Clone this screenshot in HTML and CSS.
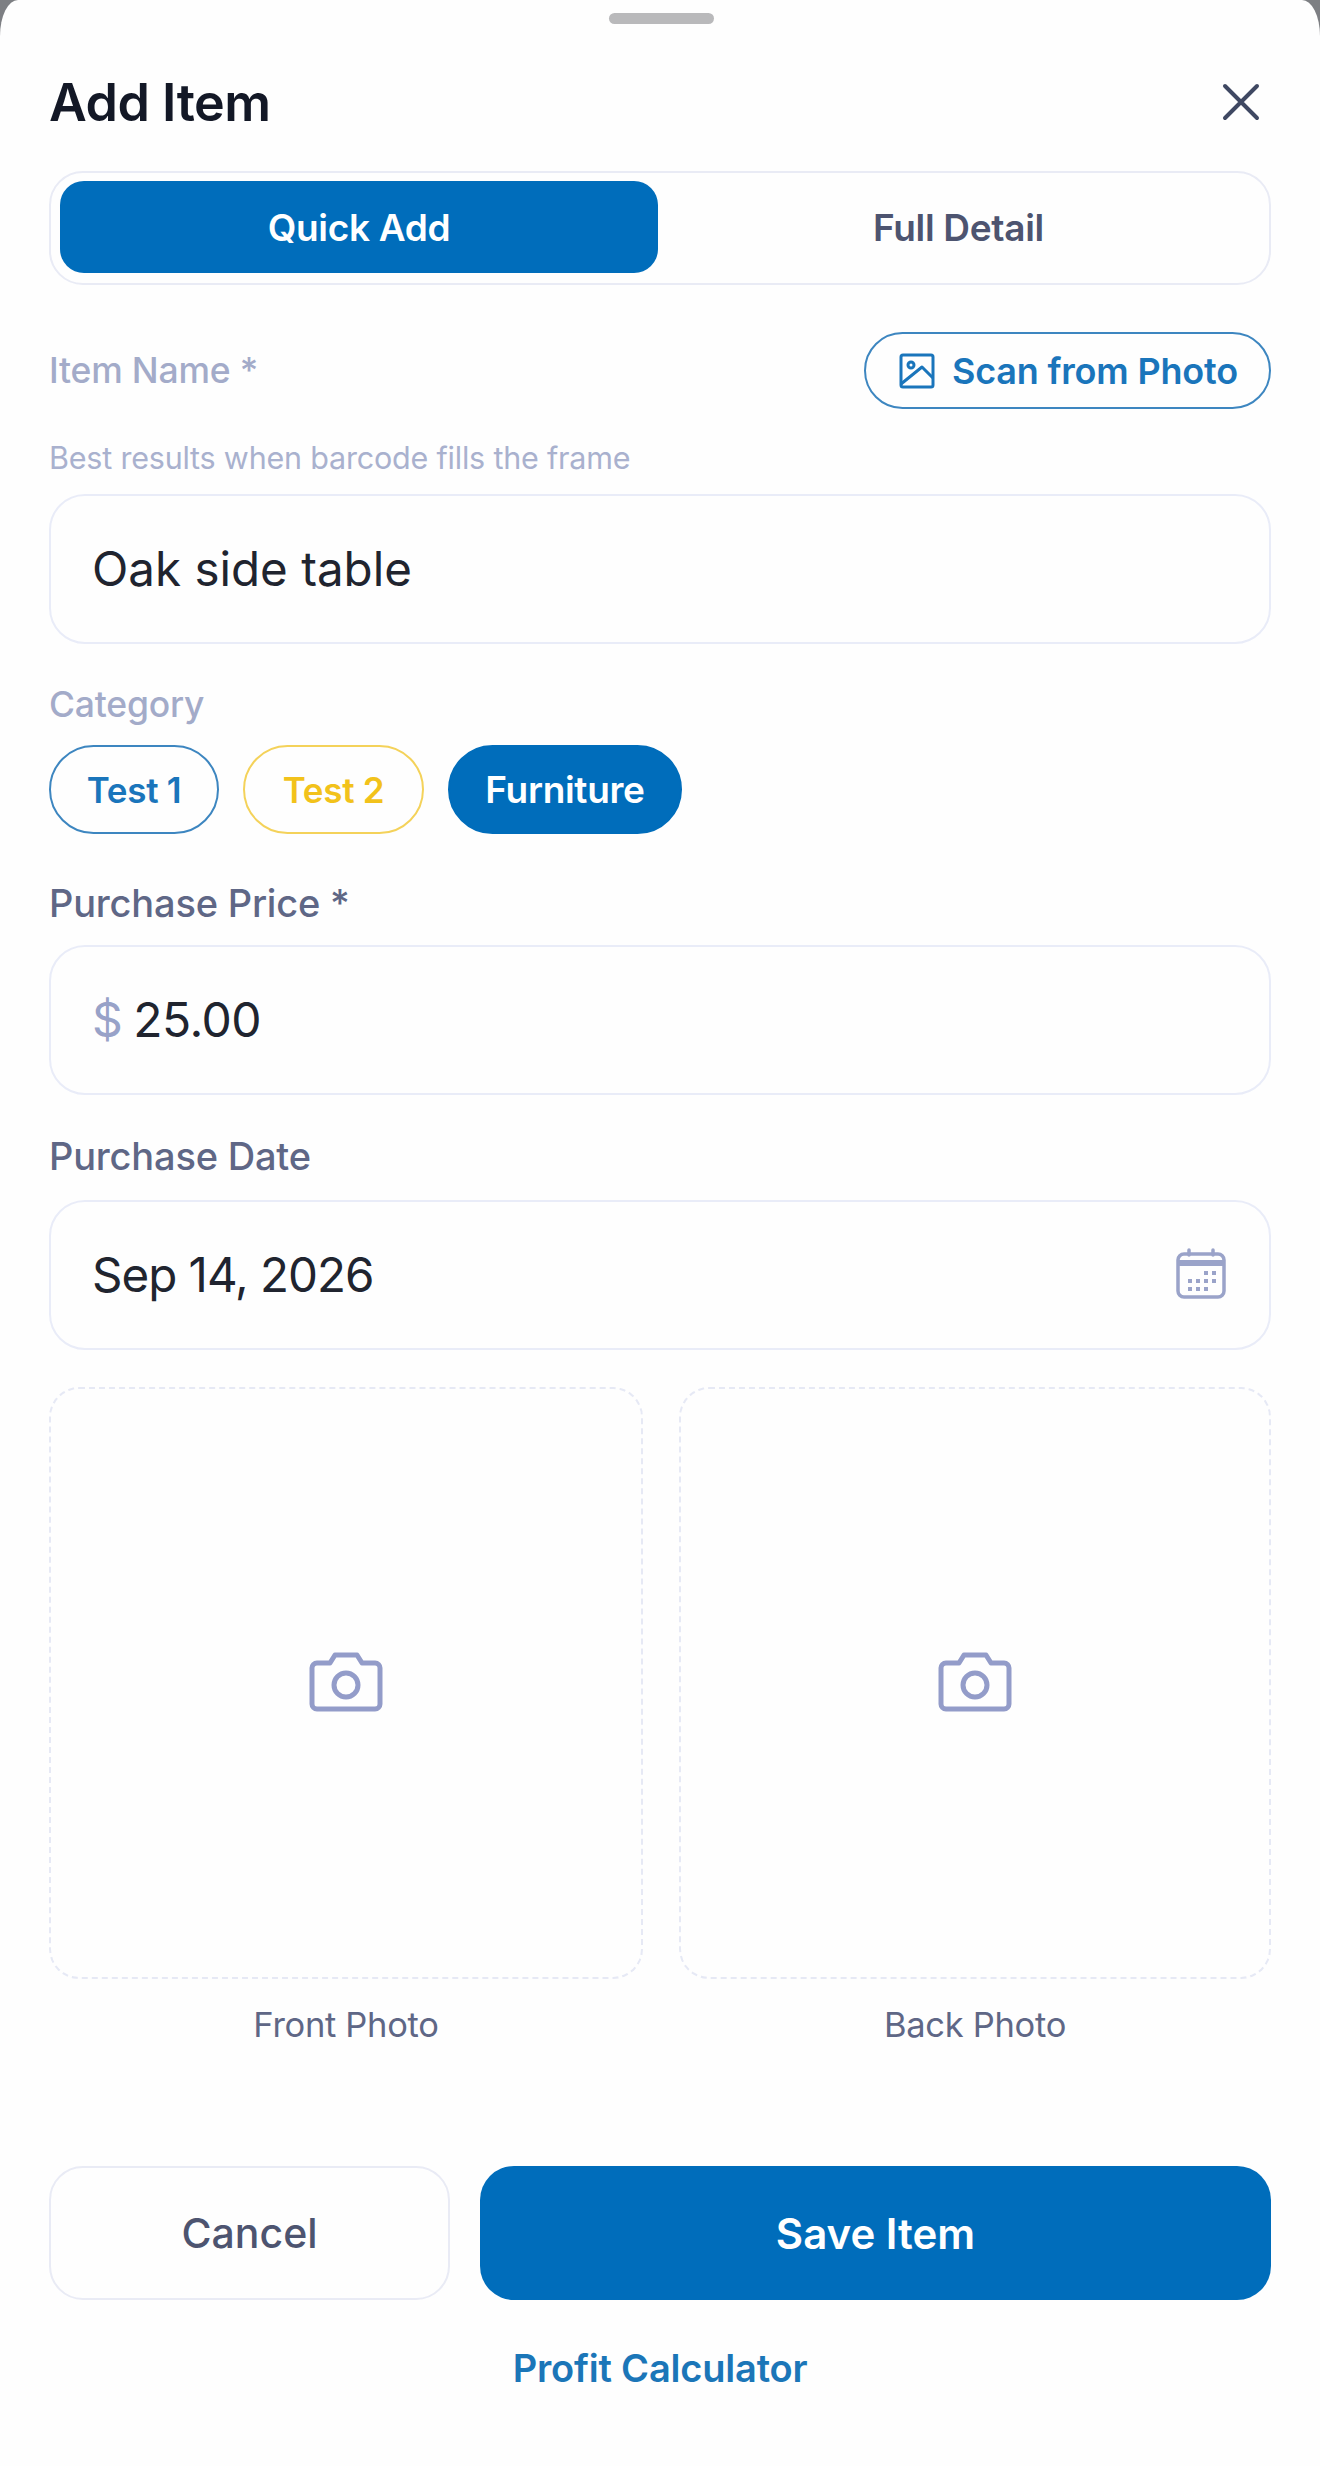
FILE: index.html
```html
<!DOCTYPE html>
<html lang="en">
<head>
<meta charset="utf-8">
<title>Add Item</title>
<link rel="stylesheet" href="styles.css">
</head>
<body>
<main class="sheet">
  <div class="grabber"></div>
  <header class="head">
    <h1 class="title">Add Item</h1>
    <svg class="close" viewBox="0 0 38 38" fill="none" stroke="#3f4862" stroke-width="4" stroke-linecap="round"><path d="M3 3 35 35M35 3 3 35"/></svg>
  </header>
  <div class="toggle">
    <div class="seg seg-on">Quick Add</div>
    <div class="seg">Full Detail</div>
  </div>
  <div class="name-row">
    <span class="label label-light">Item Name *</span>
    <div class="scan">
      <svg class="scan-icon" viewBox="0 0 36 36" fill="none" stroke="#1a75bb" stroke-width="3" stroke-linejoin="round"><rect x="2" y="2" width="32" height="32" rx="2"/><circle cx="12" cy="12" r="3"/><path d="M2 31 23 14 34 25"/></svg>
      <span>Scan from Photo</span>
    </div>
  </div>
  <p class="hint">Best results when barcode fills the frame</p>
  <div class="field field-name">Oak side table</div>
  <div class="label label-light label-cat">Category</div>
  <div class="chips">
    <span class="chip chip-blue">Test 1</span>
    <span class="chip chip-yellow">Test 2</span>
    <span class="chip chip-on">Furniture</span>
  </div>
  <div class="label label-price">Purchase Price *</div>
  <div class="field field-price"><span class="dollar">$</span>25.00</div>
  <div class="label label-date">Purchase Date</div>
  <div class="field field-date">
    <span>Sep 14, 2026</span>
    <svg class="cal" viewBox="0 0 52 52" fill="none" stroke="#9aa3c9" stroke-width="3.5"><rect x="3" y="6" width="46" height="43" rx="6"/><path d="M3 15H49" stroke-width="6"/><path d="M14 2V7M38 2V7" stroke-linecap="round"/><path d="M29 25h4M37 25h4M13 33h4M21 33h4M29 33h4M37 33h4M13 41h4M21 41h4M29 41h4" stroke-width="4"/></svg>
  </div>
  <div class="photos">
    <div class="photo">
      <div class="drop">
        <svg class="cam" viewBox="0 0 74 62" fill="none" stroke="#939cc9" stroke-width="5" stroke-linejoin="round"><path d="M8 12H21L26 4H48L53 12H66A5 5 0 0 1 71 17V53A5 5 0 0 1 66 58H8A5 5 0 0 1 3 53V17A5 5 0 0 1 8 12Z"/><circle cx="37" cy="34" r="12"/></svg>
      </div>
      <div class="cap">Front Photo</div>
    </div>
    <div class="photo">
      <div class="drop">
        <svg class="cam" viewBox="0 0 74 62" fill="none" stroke="#939cc9" stroke-width="5" stroke-linejoin="round"><path d="M8 12H21L26 4H48L53 12H66A5 5 0 0 1 71 17V53A5 5 0 0 1 66 58H8A5 5 0 0 1 3 53V17A5 5 0 0 1 8 12Z"/><circle cx="37" cy="34" r="12"/></svg>
      </div>
      <div class="cap">Back Photo</div>
    </div>
  </div>
  <div class="actions">
    <div class="btn btn-cancel">Cancel</div>
    <div class="btn btn-save">Save Item</div>
  </div>
  <div class="profit">Profit Calculator</div>
</main>
</body>
</html>
```

FILE: styles.css
```css
* { box-sizing: border-box; }
html, body { margin: 0; height: 100%; }
body {
  background: #7d7f83;
  font-family: Inter, "Noto Sans", sans-serif;
  overflow: hidden;
}
.sheet {
  width: 1320px;
  height: 2466px;
  background: #fefefe;
  border-radius: 18px 18px 0 0 / 36px 36px 0 0;
  padding: 13px 49px 0;
  display: flex;
  flex-direction: column;
}
.grabber {
  width: 105px;
  height: 11px;
  border-radius: 6px;
  background: #b9b9bb;
  align-self: center;
  margin-left: 3px;
}
.head {
  display: flex;
  justify-content: space-between;
  align-items: center;
  height: 44px;
  margin-top: 56px;
}
.title {
  margin: 0;
  font-size: 52px;
  font-weight: 600;
  letter-spacing: -0.5px;
  color: #131826;
}
.close { width: 38px; height: 38px; margin-right: 11px; }
.toggle {
  display: flex;
  height: 114px;
  margin-top: 47px;
  padding: 8px 10px 10px 9px;
  border: 2px solid #e9ebf5;
  border-radius: 34px;
}
.seg {
  flex: 1;
  display: flex;
  align-items: center;
  justify-content: center;
  font-size: 37px;
  font-weight: 600;
  color: #4d5470;
  letter-spacing: -0.3px;
}
.seg-on { flex: none; width: 598px; background: #006dbb; color: #fff; border-radius: 24px; }
.name-row {
  display: flex;
  justify-content: space-between;
  align-items: center;
  height: 77px;
  margin-top: 47px;
}
.label { font-size: 38px; font-weight: 500; letter-spacing: -0.2px; line-height: 42px; color: #5f6786; }
.label-light { font-size: 35.5px; color: #a3abc9; }
.scan {
  display: flex;
  align-items: center;
  gap: 17px;
  height: 77px;
  width: 407px;
  padding-left: 33px;
  border: 2px solid #3d86c0;
  border-radius: 39px;
  font-size: 36px;
  font-weight: 600;
  letter-spacing: -0.2px;
  color: #1a75bb;
}
.scan-icon { width: 36px; height: 36px; flex: none; }
.hint {
  margin: 32px 0 0;
  font-size: 30.5px;
  line-height: 34px;
  letter-spacing: -0.2px;
  color: #a9b1ce;
}
.field {
  display: flex;
  align-items: center;
  height: 150px;
  padding: 0 0 2px 41px;
  border: 2px solid #e9ecf8;
  border-radius: 36px;
  font-size: 47.5px;
  color: #20242f;
}
.field-name { margin-top: 19px; }
.field-price { font-size: 48px; letter-spacing: -0.5px; }
.label-cat { margin-top: 40px; }
.chips { display: flex; gap: 24px; margin-top: 19px; }
.chip {
  display: flex;
  align-items: center;
  justify-content: center;
  height: 89px;
  border: 2px solid;
  border-radius: 45px;
  font-size: 35px;
  font-weight: 600;
  letter-spacing: -0.3px;
}
.chip-blue { width: 170px; color: #1a75bb; border-color: #3d86c0; }
.chip-yellow { width: 181px; color: #f2c21b; border-color: #f4d25a; }
.chip-on { width: 234px; font-size: 37px; color: #fff; background: #006dbb; border-color: #006dbb; }
.label-price { margin-top: 48px; margin-bottom: 21px; }
.dollar { color: #98a2c8; margin-right: 11px; }
.label-date { margin-top: 40px; margin-bottom: 23px; }
.field-date { justify-content: space-between; padding-right: 42px; letter-spacing: -1px; }
.cal { width: 52px; height: 52px; }
.photos { display: grid; grid-template-columns: 594px 592px; gap: 36px; margin-top: 37px; }
.drop {
  display: flex;
  align-items: center;
  justify-content: center;
  padding-bottom: 2px;
  height: 592px;
  border: 2px dashed #e6e9f5;
  border-radius: 30px;
}
.cam { width: 74px; height: 62px; }
.cap {
  margin-top: 27px;
  text-align: center;
  font-size: 34.5px;
  line-height: 38px;
  letter-spacing: -0.3px;
  color: #5f6786;
}
.actions { display: grid; grid-template-columns: 401px 791px; gap: 30px; margin-top: 122px; }
.btn {
  display: flex;
  align-items: center;
  justify-content: center;
  height: 134px;
  border-radius: 34px;
  font-size: 42px;
  font-weight: 600;
}
.btn-cancel { border: 2px solid #e9ebf5; color: #4d5470; font-size: 41px; font-weight: 500; }
.btn-save { background: #006dbb; color: #fff; }
.profit {
  margin-top: 46px;
  text-align: center;
  font-size: 38px;
  line-height: 44px;
  font-weight: 600;
  letter-spacing: -0.2px;
  color: #1b76b8;
}
```
